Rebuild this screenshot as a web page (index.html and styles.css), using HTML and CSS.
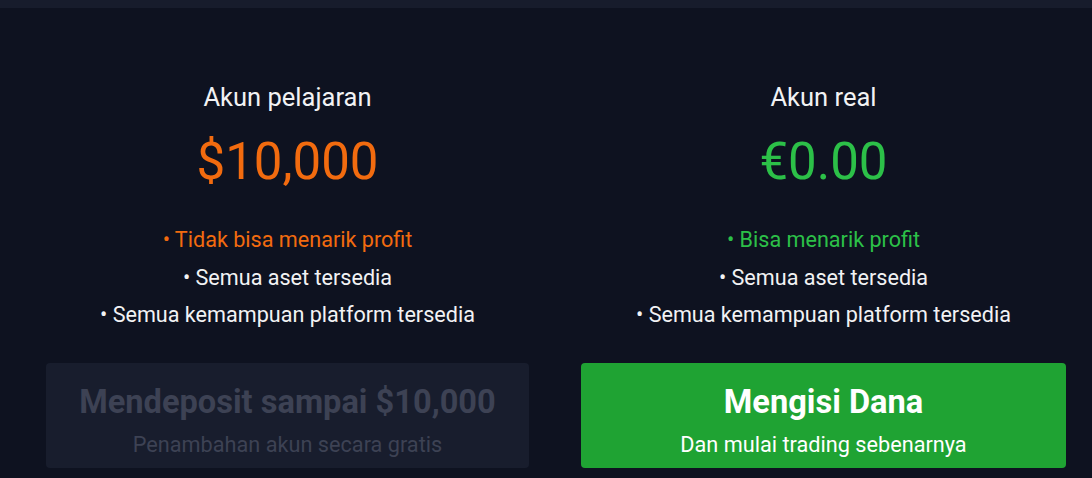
FILE: index.html
```html
<!DOCTYPE html>
<html lang="id">
<head>
<meta charset="utf-8">
<link rel="stylesheet" href="styles.css">
</head>
<body>
<div class="topbar"></div>
<main class="accounts">
  <section class="account">
    <h2 class="title">Akun pelajaran</h2>
    <div class="amount amount-demo">$10,000</div>
    <ul class="features">
      <li class="feat-demo">• Tidak bisa menarik profit</li>
      <li>• Semua aset tersedia</li>
      <li>• Semua kemampuan platform tersedia</li>
    </ul>
    <button class="btn btn-disabled">
      <span class="btn-title">Mendeposit sampai $10,000</span>
      <span class="btn-sub">Penambahan akun secara gratis</span>
    </button>
  </section>
  <section class="account">
    <h2 class="title">Akun real</h2>
    <div class="amount amount-real">€0.00</div>
    <ul class="features">
      <li class="feat-real">• Bisa menarik profit</li>
      <li>• Semua aset tersedia</li>
      <li>• Semua kemampuan platform tersedia</li>
    </ul>
    <button class="btn btn-green">
      <span class="btn-title">Mengisi Dana</span>
      <span class="btn-sub">Dan mulai trading sebenarnya</span>
    </button>
  </section>
</main>
</body>
</html>
```
FILE: styles.css
```css
html, body {
  margin: 0;
  padding: 0;
}
body {
  background: #0e1220;
  font-family: Roboto, "Noto Sans", Arial, sans-serif;
  color: #f2f2f4;
  width: 1092px;
  height: 478px;
  overflow: hidden;
}
.topbar {
  height: 8px;
  background: #171c2c;
}
.accounts {
  display: grid;
  grid-template-columns: 483px 485px;
  column-gap: 52px;
  padding: 74px 26px 0 46px;
}
.account {
  display: flex;
  flex-direction: column;
  align-items: center;
  text-align: center;
}
.title {
  margin: 0;
  font-size: 25.5px;
  font-weight: 400;
  line-height: 30px;
}
.amount {
  margin-top: 20px;
  font-size: 51px;
  line-height: 60px;
  font-weight: 400;
}
.amount-demo { color: #f26b0f; }
.amount-real { color: #2cc048; }
.features {
  list-style: none;
  margin: 29px 0 0;
  padding: 0;
  font-size: 21.6px;
  line-height: 37.5px;
}
.feat-demo { color: #f26b0f; }
.feat-real { color: #2cc048; }
.btn {
  margin-top: 29px;
  width: 100%;
  height: 105px;
  border: none;
  border-radius: 4px;
  display: flex;
  flex-direction: column;
  align-items: center;
  font-family: inherit;
  padding: 20px 0 0;
}
.btn-title {
  font-size: 32.6px;
  font-weight: 700;
  line-height: 38px;
}
.btn-sub {
  margin-top: 11px;
  font-size: 21.7px;
  line-height: 26px;
}
.btn-disabled {
  background: #181d2d;
  color: #3d4254;
}
.btn-green {
  background: #1fa333;
  color: #ffffff;
}
```
